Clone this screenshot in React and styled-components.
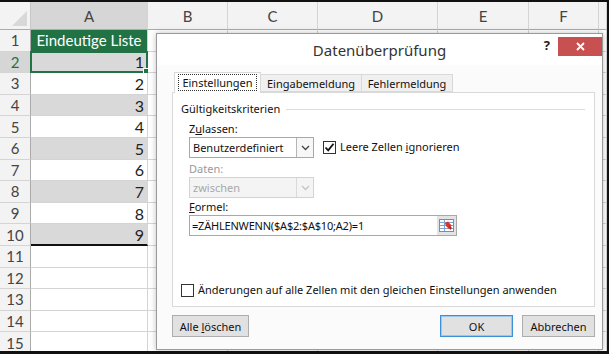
import React from "react";
import styled, { createGlobalStyle } from "styled-components";

const GlobalStyle = createGlobalStyle`
  html, body { margin: 0; padding: 0; background: #fff; }
  body { width: 609px; height: 354px; overflow: hidden; }
`;

const Frame = styled.div`
  position: relative;
  width: 609px;
  height: 354px;
  box-sizing: border-box;
  border-top: 2px solid #111;
  border-right: 2px solid #111;
  border-bottom: 3px solid #111;
  overflow: hidden;
  background: #fff;
`;

const Sheet = styled.div`
  display: grid;
  grid-template-columns: 31px 117px 80px 90px 120px 91px 70px 1fr;
  grid-template-rows: 28px repeat(15, 21.6px);
  font-family: Lato, "Liberation Sans", sans-serif;
`;

const Corner = styled.div`
  position: relative;
  background: #f3f3f3;
  border-right: 1px solid #c8c8c8;
  border-bottom: 1px solid #ababab;
  box-sizing: border-box;
  &::after {
    content: "";
    position: absolute;
    right: 3px;
    bottom: 3px;
    border-left: 15px solid transparent;
    border-bottom: 15px solid #d8d8d8;
  }
`;

const ColHead = styled.div`
  display: flex;
  align-items: center;
  justify-content: center;
  box-sizing: border-box;
  background: ${(p) => (p.$active ? "#d6d6d6" : "#f3f3f3")};
  border-right: 1px solid #d4d4d4;
  border-bottom: 1px solid #ababab;
  color: #444;
  font-size: 15px;
  padding-top: 1px;
`;

const RowHead = styled.div`
  display: flex;
  align-items: center;
  justify-content: center;
  box-sizing: border-box;
  background: ${(p) => (p.$active ? "#d6d6d6" : "#f3f3f3")};
  border-right: 1px solid #ababab;
  border-bottom: 1px solid #d4d4d4;
  color: ${(p) => (p.$active ? "#217346" : "#444")};
  font-size: 15px;
`;

const Cell = styled.div`
  position: relative;
  display: flex;
  align-items: center;
  justify-content: ${(p) => (p.$fill === "green" ? "center" : "flex-end")};
  box-sizing: border-box;
  padding-right: ${(p) => (p.$fill === "green" ? 0 : 3)}px;
  font-size: ${(p) => (p.$fill === "green" ? 15 : 16)}px;
  white-space: nowrap;
  background: ${(p) =>
    p.$fill === "green" ? "#217346" : p.$fill === "gray" ? "#d9d9d9" : "#fff"};
  color: ${(p) => (p.$fill === "green" ? "#fff" : "#222")};
  border-right: 1px solid #d4d4d4;
  border-bottom: ${(p) => (p.$thick ? "2px solid #111" : "1px solid #d4d4d4")};
`;

const Selection = styled.div`
  position: absolute;
  inset: -1px -1px -1px -1px;
  border: 2px solid #217346;
  pointer-events: none;
  &::after {
    content: "";
    position: absolute;
    right: -4px;
    bottom: -4px;
    width: 5px;
    height: 5px;
    background: #217346;
    border: 1px solid #fff;
  }
`;

const Dialog = styled.div`
  position: absolute;
  left: 156px;
  top: 31px;
  width: 447px;
  height: 317px;
  box-sizing: border-box;
  background: #fbfbfb;
  border: 1px solid #9a9a9a;
  box-shadow: 0 0 6px rgba(0, 0, 0, 0.25);
  font-family: "Noto Sans", "Liberation Sans", sans-serif;
  font-size: 11px;
  color: #111;
  display: flex;
  flex-direction: column;
`;

const TitleBar = styled.div`
  height: 31px;
  display: grid;
  grid-template-columns: 1fr auto 1fr;
  background: #fff;
`;

const Title = styled.div`
  padding-top: 6px;
  font-size: 15px;
  color: #333;
`;

const Controls = styled.div`
  display: flex;
  justify-content: flex-end;
  align-items: flex-start;
  gap: 8px;
  padding-top: 3px;
`;

const Help = styled.span`
  font-size: 13px;
  font-weight: 700;
  color: #222;
  line-height: 14px;
  padding-top: 1px;
`;

const Close = styled.div`
  width: 44px;
  height: 19px;
  background: #c75050;
  display: flex;
  align-items: center;
  justify-content: center;
`;

const Body = styled.div`
  flex: 1;
  padding: 7px 7px 0 15px;
  display: flex;
  flex-direction: column;
`;

const Tabs = styled.div`
  display: flex;
  align-items: flex-end;
  padding-left: 2px;
  position: relative;
  z-index: 1;
`;

const Tab = styled.div`
  box-sizing: border-box;
  width: ${(p) => p.$w}px;
  height: ${(p) => (p.$active ? 21 : 18)}px;
  margin-bottom: ${(p) => (p.$active ? -1 : 0)}px;
  margin-left: ${(p) => (p.$active ? 0 : -1)}px;
  background: ${(p) => (p.$active ? "#fff" : "#f0f0f0")};
  border: 1px solid #d9d9d9;
  border-bottom: ${(p) => (p.$active ? "none" : "1px solid #d9d9d9")};
  display: flex;
  align-items: center;
  justify-content: center;
  padding-bottom: ${(p) => (p.$active ? 2 : 0)}px;
  &:first-child { margin-left: 0; }
`;

const Focus = styled.span`
  outline: 1px dotted #333;
  outline-offset: 0;
  padding: 0 3px;
  line-height: 15px;
`;

const Panel = styled.div`
  height: 215px;
  box-sizing: border-box;
  background: #fff;
  border: 1px solid #d9d9d9;
  padding: 8px 8px 8px 8px;
  display: flex;
  flex-direction: column;
`;

const GroupHead = styled.div`
  display: flex;
  align-items: center;
  gap: 6px;
  line-height: 16px;
  &::after {
    content: "";
    flex: 1;
    height: 1px;
    background: #dcdcdc;
    margin-right: 1px;
  }
`;

const Group = styled.div`
  padding-left: 8px;
  padding-top: 4px;
  display: flex;
  flex-direction: column;
`;

const Label = styled.div`
  line-height: 16px;
  color: ${(p) => (p.$disabled ? "#9a9a9a" : "#111")};
  margin-top: ${(p) => p.$mt || 0}px;
`;

const Row = styled.div`
  display: flex;
  align-items: flex-start;
  gap: 9px;
`;

const Select = styled.div`
  box-sizing: border-box;
  width: 125px;
  height: 21px;
  border: 1px solid ${(p) => (p.$disabled ? "#d3d3d3" : "#a8a8a8")};
  background: ${(p) => (p.$disabled ? "#f4f4f4" : "#fff")};
  color: ${(p) => (p.$disabled ? "#a8a8a8" : "#111")};
  display: flex;
  align-items: center;
  padding-left: 3px;
`;

const SelectText = styled.span`
  flex: 1;
`;

const Arrow = styled.div`
  box-sizing: border-box;
  width: 17px;
  height: 19px;
  border-left: 1px solid ${(p) => (p.$disabled ? "#dadada" : "#b5b5b5")};
  background: ${(p) => (p.$disabled ? "#f4f4f4" : "#f7f7f7")};
  display: flex;
  align-items: center;
  justify-content: center;
`;

const CheckRow = styled.label`
  display: flex;
  align-items: center;
  gap: 4px;
  line-height: 16px;
  margin-top: ${(p) => p.$mt || 0}px;
`;

const Box = styled.span`
  box-sizing: border-box;
  width: 13px;
  height: 13px;
  border: 1px solid #333;
  background: #fff;
  display: inline-flex;
  align-items: center;
  justify-content: center;
`;

const Input = styled.div`
  box-sizing: border-box;
  width: 268px;
  height: 21px;
  border: 1px solid #a8a8a8;
  background: #fff;
  display: flex;
  align-items: center;
  padding-left: 2px;
`;

const InputText = styled.span`
  flex: 1;
  letter-spacing: -0.2px;
`;

const RefButton = styled.div`
  width: 19px;
  height: 19px;
  background: #e3e3e3;
  display: flex;
  align-items: center;
  justify-content: center;
`;

const Spacer = styled.div`
  flex: 1;
`;

const Footer = styled.div`
  display: flex;
  margin-top: 8px;
  gap: 9px;
`;

const Button = styled.div`
  box-sizing: border-box;
  width: ${(p) => p.$w}px;
  height: 22px;
  display: flex;
  align-items: center;
  justify-content: center;
  background: #e1e1e1;
  border: 1px solid ${(p) => (p.$primary ? "#3c8fd9" : "#adadad")};
  box-shadow: ${(p) => (p.$primary ? "inset 0 0 0 1px #9cc8f0" : "none")};
  margin-left: ${(p) => (p.$push ? "auto" : "0")};
`;

const Chevron = ({ color = "#444" }) => (
  <svg width="9" height="6" viewBox="0 0 9 6">
    <path d="M1 1 L4.5 4.5 L8 1" fill="none" stroke={color} strokeWidth="1.3" />
  </svg>
);

const CheckMark = () => (
  <svg width="11" height="11" viewBox="0 0 11 11">
    <path d="M1.5 5.5 L4.2 8.3 L9.5 1.8" fill="none" stroke="#111" strokeWidth="1.8" />
  </svg>
);

const RefIcon = () => (
  <svg width="15" height="13" viewBox="0 0 15 13">
    <rect x="0.5" y="0.5" width="14" height="12" fill="#fff" stroke="#6f8fb8" />
    <path d="M1 3.5 H14 M1 6.5 H14 M1 9.5 H14 M5.5 1 V12" stroke="#7ea3d4" strokeWidth="1" />
    <path d="M6 4 L9 2.5 L12.5 6.5 L10 10 L7 7 Z" fill="#d9332b" />
    <path d="M10 6 L13 9 L11 11 Z" fill="#b02020" />
  </svg>
);

const cols = ["A", "B", "C", "D", "E", "F", ""];

export default function App() {
  const rows = Array.from({ length: 15 }, (_, i) => i + 1);
  return (
    <>
      <GlobalStyle />
      <Frame>
        <Sheet>
          <Corner />
          {cols.map((c) => (
            <ColHead key={c || "rest"} $active={c === "A"}>{c}</ColHead>
          ))}
          {rows.map((r) => (
            <React.Fragment key={r}>
              <RowHead $active={r === 2}>{r}</RowHead>
              {cols.map((c) => {
                if (c !== "A") return <Cell key={c || "rest"} />;
                if (r === 1) return <Cell key={c} $fill="green">Eindeutige Liste</Cell>;
                if (r <= 10)
                  return (
                    <Cell key={c} $fill={r % 2 === 0 ? "gray" : undefined} $thick={r === 10}>
                      {r - 1}
                      {r === 2 && <Selection />}
                    </Cell>
                  );
                return <Cell key={c} />;
              })}
            </React.Fragment>
          ))}
        </Sheet>

        <Dialog>
          <TitleBar>
            <div />
            <Title>Datenüberprüfung</Title>
            <Controls>
              <Help>?</Help>
              <Close>
                <svg width="9" height="9" viewBox="0 0 9 9">
                  <path d="M1 1 L8 8 M8 1 L1 8" stroke="#fff" strokeWidth="1.8" />
                </svg>
              </Close>
            </Controls>
          </TitleBar>
          <Body>
            <Tabs>
              <Tab $active $w={87}><Focus>Einstellungen</Focus></Tab>
              <Tab $w={102}>Eingabemeldung</Tab>
              <Tab $w={92}>Fehlermeldung</Tab>
            </Tabs>
            <Panel>
              <GroupHead>Gültigkeitskriterien</GroupHead>
              <Group>
                <Label>Z<u>u</u>lassen:</Label>
                <Row>
                  <Select>
                    <SelectText>Benutzerdefiniert</SelectText>
                    <Arrow><Chevron /></Arrow>
                  </Select>
                  <CheckRow $mt={2}>
                    <Box><CheckMark /></Box>
                    <span>Leere Zellen <u>i</u>gnorieren</span>
                  </CheckRow>
                </Row>
                <Label $disabled $mt={3}>Daten:</Label>
                <Select $disabled>
                  <SelectText>zwischen</SelectText>
                  <Arrow $disabled><Chevron color="#c4c4c4" /></Arrow>
                </Select>
                <Label $mt={1}><u>F</u>ormel:</Label>
                <Input>
                  <InputText>=ZÄHLENWENN($A$2:$A$10;A2)=1</InputText>
                  <RefButton><RefIcon /></RefButton>
                </Input>
              </Group>
              <Spacer />
              <CheckRow>
                <Box />
                <span>Änderungen auf alle Zellen mit den gleichen Einstellungen anwenden</span>
              </CheckRow>
            </Panel>
            <Footer>
              <Button $w={77}><span>Alle <u>l</u>öschen</span></Button>
              <Button $w={73} $primary $push>OK</Button>
              <Button $w={73}>Abbrechen</Button>
            </Footer>
          </Body>
        </Dialog>
      </Frame>
    </>
  );
}
